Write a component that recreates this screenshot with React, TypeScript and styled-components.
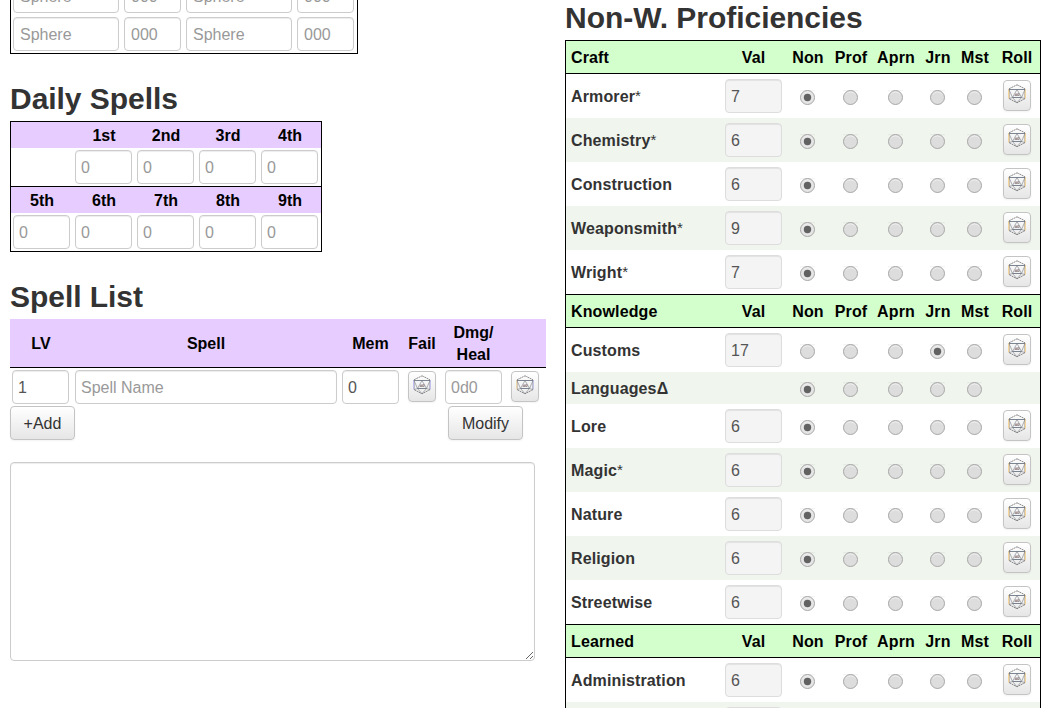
import React from "react";
import styled, { createGlobalStyle } from "styled-components";

const GlobalStyle = createGlobalStyle`
  * { box-sizing: border-box; }
  html, body { margin: 0; padding: 0; background: #fff; overflow: hidden; }
  body, input, button, textarea {
    font-family: "Liberation Sans", Arial, Helvetica, sans-serif;
    font-size: 16px;
  }
`;

const Sheet = styled.main`
  display: flex;
  align-items: flex-start;
  gap: 19px;
  width: 1063px;
  height: 708px;
  padding-left: 10px;
  overflow: hidden;
  color: #333;
`;

const SpellColumn = styled.section`
  display: flex;
  flex-direction: column;
  width: 536px;
`;

const SkillColumn = styled.section`
  width: 476px;
`;

const Heading = styled.h2<{ $top: number }>`
  margin: ${(p) => p.$top}px 0 0;
  height: 40px;
  font-size: 30px;
  line-height: 35px;
  font-weight: bold;
  letter-spacing: -0.04px;
  color: #333;
  white-space: nowrap;
`;

const Field = styled.input<{ $width?: number }>`
  display: block;
  width: ${(p) => p.$width ?? 57}px;
  height: 34px;
  margin: 0;
  padding: 2px 5px 0;
  border: 1px solid #ccc;
  border-radius: 4px;
  background: #fff;
  color: #555;
  box-shadow: inset 0 1px 1px rgba(0, 0, 0, 0.075);
  outline: none;
  &::placeholder { color: #999; opacity: 1; }
  &:disabled { background: #f4f4f4; border-color: #ddd; }
`;

const SphereTable = styled.div`
  display: flex;
  flex-direction: column;
  justify-content: flex-end;
  gap: 4px;
  width: 348px;
  height: 54px;
  padding: 0 2px 2px;
  border: 1px solid #000;
  border-top: 0;
  overflow: hidden;
`;

const SphereRow = styled.div`
  display: flex;
  flex: none;
  gap: 5px;
  ${Field} { padding-left: 6px; }
`;

const DailyTable = styled.div`
  width: 312px;
  border: 1px solid #000;
`;

const DailyHeader = styled.div`
  display: grid;
  grid-template-columns: repeat(5, 62px);
  height: 26px;
  line-height: 27px;
  background: #e6ccff;
  color: #000;
  font-weight: bold;
  text-align: center;
`;

const DailyRow = styled.div<{ $divided?: boolean }>`
  display: grid;
  grid-template-columns: repeat(5, 62px);
  padding: 2px 0 2px 2px;
  border-bottom: ${(p) => (p.$divided ? "1px solid #000" : "0")};
`;

const SpellHeader = styled.div`
  display: grid;
  grid-template-columns: 62px 268px 61px 42px 61px 42px;
  align-items: center;
  height: 49px;
  padding-top: 2px;
  border-bottom: 1px solid #000;
  background: #e6ccff;
  color: #000;
  font-weight: bold;
  line-height: 22px;
  text-align: center;
`;

const SpellRow = styled.div`
  display: grid;
  grid-template-columns: 63px 267px 61px 42px 61px 42px;
  height: 38px;
  padding-top: 2px;
`;

const SpellCell = styled.div`
  padding-left: 2px;
`;

const SpellRollCell = styled.div`
  padding: 1px 0 0 7px;
`;

const SpellActions = styled.div`
  display: flex;
  justify-content: space-between;
  padding-right: 23px;
`;

const Button = styled.button<{ $width: number }>`
  width: ${(p) => p.$width}px;
  height: 34px;
  padding: 2px 0 0;
  border: 1px solid #c4c4c4;
  border-radius: 4px;
  background: linear-gradient(#fff, #e6e6e6);
  color: #333;
  box-shadow: inset 0 1px 0 rgba(255, 255, 255, 0.2), 0 1px 2px rgba(0, 0, 0, 0.05);
`;

const RollButton = styled.button`
  display: flex;
  justify-content: center;
  width: 28px;
  height: 31px;
  padding: 3px 0 0;
  border: 1px solid #c4c4c4;
  border-radius: 4px;
  background: linear-gradient(#fff, #e6e6e6);
  box-shadow: 0 1px 2px rgba(0, 0, 0, 0.05);
`;

const Notes = styled.textarea`
  display: block;
  width: 525px;
  height: 199px;
  margin: 22px 0 0;
  border: 1px solid #ccc;
  border-radius: 4px;
  box-shadow: inset 0 1px 1px rgba(0, 0, 0, 0.075);
  outline: none;
`;

const SkillTable = styled.div`
  border: 1px solid #000;
  border-bottom: 0;
`;

const skillColumns = "156px 63px 45px 41px 49px 35px 39px 46px";

const SkillHeader = styled.div<{ $first: boolean }>`
  display: grid;
  grid-template-columns: ${skillColumns};
  height: ${(p) => (p.$first ? 33 : 34)}px;
  line-height: 33px;
  border-top: ${(p) => (p.$first ? "0" : "1px solid #000")};
  border-bottom: 1px solid #000;
  background: #d3ffcc;
  color: #000;
  font-weight: bold;
  letter-spacing: 0.13px;
  text-align: center;
`;

const SkillRow = styled.div<{ $tinted: boolean; $short: boolean }>`
  display: grid;
  grid-template-columns: ${skillColumns};
  align-items: center;
  justify-items: center;
  height: ${(p) => (p.$short ? 32 : 44)}px;
  background: ${(p) => (p.$tinted ? "#f0f5ee" : "#fff")};
`;

const CategoryName = styled.span`
  padding-left: 5px;
  text-align: left;
`;

const RankName = styled.span`
  padding-left: 1px;
`;

const SkillName = styled.span`
  justify-self: start;
  padding: 1px 0 0 5px;
  font-weight: bold;
  letter-spacing: 0.13px;
  line-height: 18px;
  white-space: nowrap;
`;

const Mark = styled.span`
  font-size: 15px;
  font-weight: normal;
  line-height: 1;
  vertical-align: 1px;
`;

const RadioFrame = styled.span`
  width: 15px;
  height: 15px;
  margin-top: 3px;
  background: linear-gradient(rgba(0, 0, 0, 0.055), transparent 2px);
  svg { display: block; }
`;

const RollCell = styled.span`
  height: 32px;
`;

function Radio({ checked }: { checked: boolean }) {
  return (
    <RadioFrame role="radio" aria-checked={checked}>
      <svg width="15" height="15" viewBox="0 0 15 15">
        <circle cx="7.5" cy="7.5" r="7" fill={checked ? "#e6e6e6" : "#dddddd"} stroke="#a6a6a6" />
        <path d="M2.7 4.5A5.8 5.8 0 0 1 12.3 4.5" fill="none" stroke="#eee" />
        {checked && <circle cx="7.5" cy="7.5" r="3.7" fill="#626262" />}
      </svg>
    </RadioFrame>
  );
}

function Die({ left = "#f3cf8e", right = "#f3cf8e" }: { left?: string; right?: string }) {
  return (
    <svg width="18" height="20" viewBox="0 0 18 20" fill="none">
      <path d="M9 .8 17 4.8M17 14.6 9 18.8 1 14.6M1 4.8 9 .8" stroke="#707070" strokeWidth="0.8" strokeDasharray="2 .6" />
      <path d="M.8 5v9.6" stroke={left} strokeWidth="1.3" />
      <path d="M17.2 5v9.6" stroke={right} strokeWidth="1.3" />
      <path d="M1.5 5v9.6M16.5 5v9.6" stroke="#909090" strokeWidth="0.4" />
      <path d="M1 5.5h16M4.5 13.5h9" stroke="#6c7785" strokeWidth="0.9" />
      <path d="M9 5.5 4.5 13.5 1 14.6M9 5.5l4.5 8 3.5 1.1M4.5 13.5 9 18.8l4.5-5.3M1 5.5l3.5 8M17 5.5l-3.5 8" stroke="#777b83" strokeWidth="0.6" />
      <path d="m6.9 11.5 1.1-2 1 2Zm2.7-1.8h1.5v1.8H9.6Z" stroke="#806c70" strokeWidth="0.65" />
    </svg>
  );
}

const Roll = ({ left, right }: { left?: string; right?: string }) => (
  <RollButton type="button" aria-label="Roll"><Die left={left} right={right} /></RollButton>
);

type Skill = { name: string; mark?: string; value?: string; rank?: number };

const categories: { name: string; skills: Skill[] }[] = [
  {
    name: "Craft",
    skills: [
      { name: "Armorer", mark: "*", value: "7" },
      { name: "Chemistry", mark: "*", value: "6" },
      { name: "Construction", value: "6" },
      { name: "Weaponsmith", mark: "*", value: "9" },
      { name: "Wright", mark: "*", value: "7" },
    ],
  },
  {
    name: "Knowledge",
    skills: [
      { name: "Customs", value: "17", rank: 3 },
      { name: "LanguagesΔ" },
      { name: "Lore", value: "6" },
      { name: "Magic", mark: "*", value: "6" },
      { name: "Nature", value: "6" },
      { name: "Religion", value: "6" },
      { name: "Streetwise", value: "6" },
    ],
  },
  {
    name: "Learned",
    skills: [
      { name: "Administration", value: "6" },
      { name: "", value: "" },
    ],
  },
];

const ranks = ["Non", "Prof", "Aprn", "Jrn", "Mst"];

export default function App() {
  return (
    <>
      <GlobalStyle />
      <Sheet>
        <SpellColumn>
          <SphereTable>
            {[0, 1].map((row) => (
              <SphereRow key={row}>
                <Field $width={106} placeholder="Sphere" />
                <Field placeholder="000" />
                <Field $width={106} placeholder="Sphere" />
                <Field placeholder="000" />
              </SphereRow>
            ))}
          </SphereTable>

          <Heading $top={27}>Daily Spells</Heading>
          <DailyTable>
            <DailyHeader>
              {["", "1st", "2nd", "3rd", "4th"].map((d) => <span key={d}>{d}</span>)}
            </DailyHeader>
            <DailyRow $divided>
              <span />
              {[1, 2, 3, 4].map((n) => <Field key={n} placeholder="0" />)}
            </DailyRow>
            <DailyHeader>
              {["5th", "6th", "7th", "8th", "9th"].map((d) => <span key={d}>{d}</span>)}
            </DailyHeader>
            <DailyRow>
              {[5, 6, 7, 8, 9].map((n) => <Field key={n} placeholder="0" />)}
            </DailyRow>
          </DailyTable>

          <Heading $top={27}>Spell List</Heading>
          <SpellHeader>
            <span>LV</span>
            <span>Spell</span>
            <span>Mem</span>
            <span>Fail</span>
            <span>Dmg/<br />Heal</span>
            <span />
          </SpellHeader>
          <SpellRow>
            <SpellCell><Field defaultValue="1" /></SpellCell>
            <SpellCell><Field $width={262} placeholder="Spell Name" /></SpellCell>
            <SpellCell><Field defaultValue="0" /></SpellCell>
            <SpellRollCell><Roll left="#b9b9ee" right="#b9b9ee" /></SpellRollCell>
            <SpellCell><Field placeholder="0d0" /></SpellCell>
            <SpellRollCell><Roll left="#ecd3a4" right="#bcbce6" /></SpellRollCell>
          </SpellRow>
          <SpellActions>
            <Button type="button" $width={65}>+Add</Button>
            <Button type="button" $width={75}>Modify</Button>
          </SpellActions>
          <Notes />
        </SpellColumn>

        <SkillColumn>
          <Heading $top={0}>Non-W. Proficiencies</Heading>
          <SkillTable>
            {categories.map((category, c) => (
              <React.Fragment key={category.name}>
                <SkillHeader $first={c === 0}>
                  <CategoryName>{category.name}</CategoryName>
                  <span>Val</span>
                  {ranks.map((r) => <RankName key={r}>{r}</RankName>)}
                  <span>Roll</span>
                </SkillHeader>
                {category.skills.map((skill, s) => (
                  <SkillRow key={skill.name} $tinted={s % 2 === 1} $short={skill.value === undefined}>
                    <SkillName>{skill.name}{skill.mark && <Mark>{skill.mark}</Mark>}</SkillName>
                    {skill.value === undefined ? <span /> : <Field disabled defaultValue={skill.value} />}
                    {ranks.map((r, i) => <Radio key={r} checked={i === (skill.rank ?? 0)} />)}
                    {skill.value === undefined ? <span /> : <RollCell><Roll /></RollCell>}
                  </SkillRow>
                ))}
              </React.Fragment>
            ))}
          </SkillTable>
        </SkillColumn>
      </Sheet>
    </>
  );
}
